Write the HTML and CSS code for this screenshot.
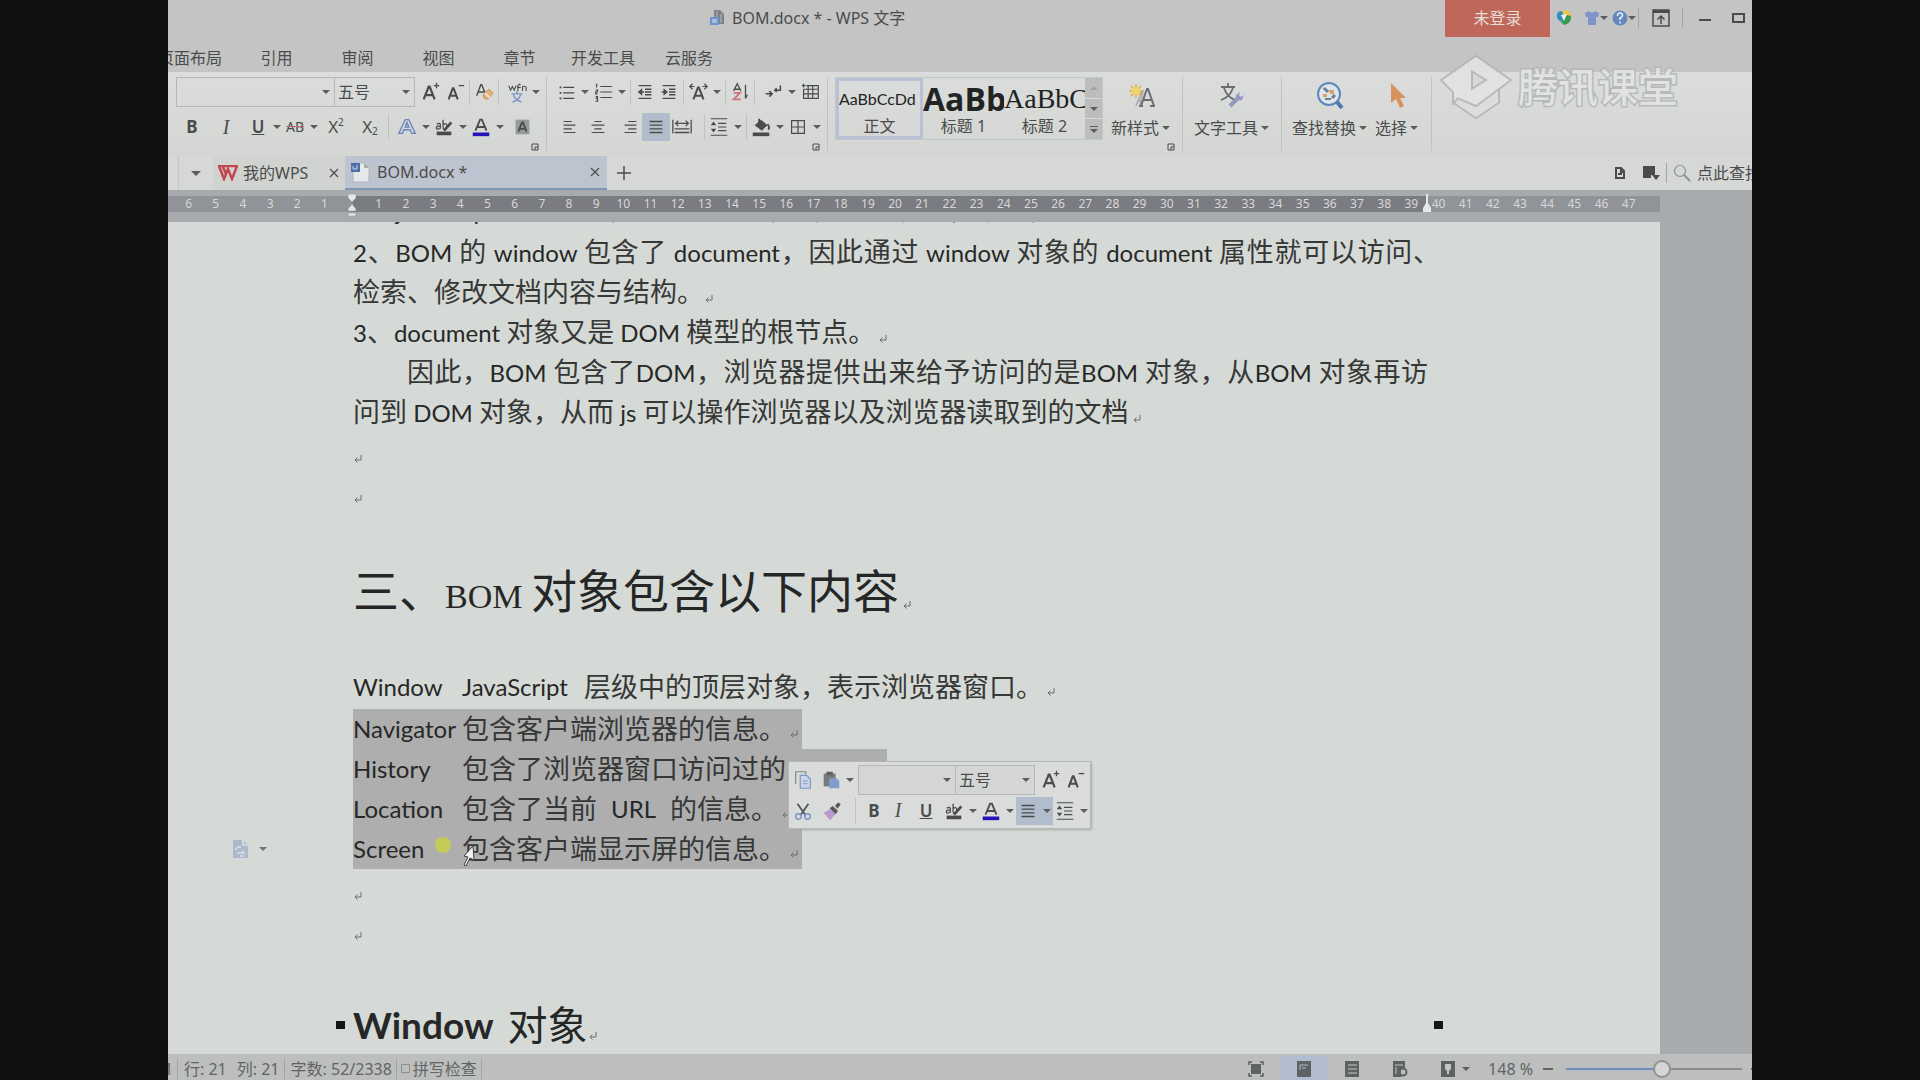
FILE: index.html
```html
<!DOCTYPE html>
<html lang="zh-CN">
<head>
<meta charset="utf-8">
<title>BOM.docx * - WPS 文字</title>
<link rel="stylesheet" href="styles.css">
</head>
<body>
<svg class="defs" aria-hidden="true">
  <symbol id="grow" viewBox="0 0 24 24"><path d="M4 20 9.500 6h1L16 20M6 15.500h8" fill="none" stroke="currentColor" stroke-width="2.400"/><path d="M18 2v6M15 5h6" stroke="currentColor" stroke-width="1.400"/></symbol>
  <symbol id="shrink" viewBox="0 0 24 24"><path d="M5 20 9.500 8h1L15 20M7 16h6" fill="none" stroke="currentColor" stroke-width="2.200"/><path d="M16 5h6" stroke="currentColor" stroke-width="1.400"/></symbol>
  <symbol id="clear" viewBox="0 0 24 24"><path d="M4 16 8.500 4h1L14 15M6 12h6" fill="none" stroke="currentColor" stroke-width="1.500"/><path d="m11 15 6-6 5 4-6 7-4-1z" fill="#e0b27c" stroke="#c88f50"/><path d="m13 13 5 5" stroke="#f2e6d4" stroke-width="2"/></symbol>
  <symbol id="pinyin" viewBox="0 0 24 24"><path d="M3 5l2 5 2-4 2 4 2-5M13 11V5q1-2 3-1M12 7h4M18 11V6q3-1 4 1v4" fill="none" stroke="currentColor" stroke-width="1.200"/><path d="M12 11v3M6 14h12M8 15q2 6 9 8M16 15q-2 6-9 8" fill="none" stroke="#7a90c8" stroke-width="1.500"/></symbol>
  <symbol id="outline" viewBox="0 0 24 24"><path d="M3 19 10 4h4l7 15h-4l-1.500-4h-7L7 19zM10 12h4l-2-5z" fill="none" stroke="#6c87c0" stroke-width="1.500"/></symbol>
  <symbol id="hilite" viewBox="0 0 24 24"><path d="M4 9q3-2 4 0v5M8 11H5q-2 1-1 3 2 1 4-1M11 4v10M11 9q4-2 4 2 0 4-4 3" fill="none" stroke="currentColor" stroke-width="1.400"/><path d="m20 7-8 9" stroke="currentColor" stroke-width="3"/><path d="M4 17h16v4H4z" fill="currentColor"/></symbol>
  <symbol id="color" viewBox="0 0 24 24"><path d="m6 16 5-12h2l5 12M8 12h8" fill="none" stroke="currentColor" stroke-width="2"/><path d="M3 18h18v4H3z" fill="#2314b4"/></symbol>
  <symbol id="shade" viewBox="0 0 24 24"><path d="M5 4h15v16H5z" fill="#979a9a"/><path d="m8 17 4-10h1l4 10M9 14h7" fill="none" stroke="#4b4d4e" stroke-width="2"/></symbol>
  <symbol id="bul" viewBox="0 0 24 24"><path d="M9 7h12M9 13h12M9 19h12" stroke="currentColor" stroke-width="1.500"/><path d="M5 6h2v2H5zM5 12h2v2H5zM5 18h2v2H5z" fill="currentColor"/></symbol>
  <symbol id="num" viewBox="0 0 24 24"><path d="M9 6h13M9 12h13M9 18h13M5 3v4M4 10h2v2H4v2h2M4 17h2v5H4M4 19h2" fill="none" stroke="currentColor" stroke-width="1.300"/></symbol>
  <symbol id="outd" viewBox="0 0 24 24"><path d="M5 5h14M12 9h7M12 12h7M12 15h7M5 19h14M6 12h5" stroke="currentColor" stroke-width="1.400"/><path d="m9 8-5 4 5 4z" fill="currentColor"/></symbol>
  <symbol id="ind" viewBox="0 0 24 24"><path d="M5 5h14M12 9h7M12 12h7M12 15h7M5 19h14M4 12h5" stroke="currentColor" stroke-width="1.400"/><path d="m6 8 5 4-5 4z" fill="currentColor"/></symbol>
  <symbol id="ascale" viewBox="0 0 24 24"><path d="m7 20 5-13h1l5 13M9 16h7" fill="none" stroke="currentColor" stroke-width="2.200"/><path d="M8 6H3M6 3 3 6l3 3M17 6h5M19 3l3 3-3 3" fill="none" stroke="currentColor" stroke-width="1.300"/></symbol>
  <symbol id="sort" viewBox="0 0 24 24"><path d="m5 11 4-8 4 8M6 9h6M18 4v15M18 19l2-4" fill="none" stroke="currentColor" stroke-width="1.400"/><path d="M5 13h7l-7 7h8" fill="none" stroke="#d4717c" stroke-width="2"/></symbol>
  <symbol id="marks" viewBox="0 0 24 24"><path d="M20 5v5h-6M16 8l-2 2 2 2M4 14h6M8 11l3 3-3 3" fill="none" stroke="currentColor" stroke-width="1.700"/></symbol>
  <symbol id="table" viewBox="0 0 24 24"><path d="M8 5h13v14H5V9M5 9h16M5 14h16M10 5v14M15 5v14M3 5h4M5 3v4" fill="none" stroke="currentColor" stroke-width="1.300"/></symbol>
  <symbol id="al" viewBox="0 0 24 24"><path d="M5 6h9M5 10h13M5 14h9M5 18h13" stroke="currentColor" stroke-width="1.300"/></symbol>
  <symbol id="ac" viewBox="0 0 24 24"><path d="M8 6h8M5 10h14M8 14h8M5 18h14" stroke="currentColor" stroke-width="1.300"/></symbol>
  <symbol id="ar" viewBox="0 0 24 24"><path d="M10 6h9M6 10h13M10 14h9M6 18h13" stroke="currentColor" stroke-width="1.300"/></symbol>
  <symbol id="aj" viewBox="0 0 24 24"><path d="M5 6h14M5 10h14M5 14h14M5 18h14" stroke="currentColor" stroke-width="1.500"/></symbol>
  <symbol id="ad" viewBox="0 0 24 24"><path d="M2 4v15M22 4v15M5 8h14M8 5 5 8l3 3M16 5l3 3-3 3M4 14h16M4 18h16" fill="none" stroke="currentColor" stroke-width="1.400"/></symbol>
  <symbol id="lsp" viewBox="0 0 24 24"><path d="M3 3h18M11 8h9M11 12h9M11 16h9M3 21h18" stroke="currentColor" stroke-width="1.300"/><path d="m3 10 3-4 3 4zM3 14l3 4 3-4z" fill="currentColor"/></symbol>
  <symbol id="fill" viewBox="0 0 24 24"><path d="m5 10 7-6 7 6-6 6z" fill="currentColor"/><path d="M19 9q3 3 1 6M10 3v5" stroke="currentColor" fill="none" stroke-width="2"/><path d="M3 18h18v4H3z" fill="currentColor"/></symbol>
  <symbol id="bord" viewBox="0 0 24 24"><path d="M5 5h14v14H5zM12 5v14M5 12h14" fill="none" stroke="currentColor" stroke-width="1.300"/></symbol>
  <symbol id="launch" viewBox="0 0 8 8"><path d="M1 1h6M1 1v6h3M7 1v3M4 4h3v3H4z" fill="none" stroke="currentColor"/></symbol>
  <symbol id="ret" viewBox="0 0 10 10"><path d="M8 1v5H2M4.500 3.500 2 6l2.500 2.500" fill="none" stroke="currentColor"/></symbol>
  <symbol id="x" viewBox="0 0 12 12"><path d="m2 2 8 8M10 2l-8 8" stroke="currentColor" stroke-width="1.200"/></symbol>
</svg>

<div class="app">
  <header class="titlebar">
    <div class="doc-title">
      <svg width="16" height="18" viewBox="0 0 16 18"><path d="M4 1h6l4 4v10H4z" fill="#7d8288"/><path d="M7 2v12M11 5v9" stroke="#b9bcbf"/><path d="M0 8h9v8H0z" fill="#6f95cf"/><path d="M2 11h5M2 13h5" stroke="#dfe6f0"/></svg>
      <span>BOM.docx * - WPS 文字</span>
    </div>
    <div class="win-tools">
      <button class="login">未登录</button>
      <button class="wt update" aria-label="更新"><svg width="16" height="18" viewBox="0 0 16 18"><path d="M1 5q1-3 5-3l2 5-2 6Q0 11 1 5" fill="#2f8fc4"/><path d="M6 2q8-2 9 5l-6 1z" fill="#e8c73c"/><path d="M15 7q1 7-7 9l-3-3 6-7z" fill="#3c9a4b"/><path d="m5 6 6-1-3 7z" fill="#eef0ee"/></svg></button>
      <button class="wt" aria-label="皮肤"><svg width="16" height="16" viewBox="0 0 16 16"><path d="M1 3 5 1q3 3 6 0l4 2-1 4h-2v8H4V7H2z" fill="#7f95c9"/></svg><i class="caret"></i></button>
      <button class="wt" aria-label="帮助"><svg width="16" height="16" viewBox="0 0 16 16"><circle cx="8" cy="8" r="7.500" fill="#6488bd"/><path d="M5.500 6q0-3 2.500-3t2.500 2.500Q10 7.500 8 8v2M8 11.500v2" fill="none" stroke="#e6eaf0" stroke-width="1.600"/></svg><i class="caret"></i></button>
      <i class="bar"></i>
      <button class="wt wide" aria-label="隐藏功能区"><svg width="18" height="18" viewBox="0 0 18 18"><path d="M1 1h16v16H1zM9 15V8M5.500 10.500 9 7l3.500 3.500" fill="none" stroke="currentColor" stroke-width="1.500"/><path d="M1 1h16v3H1z" fill="currentColor"/></svg></button>
      <i class="bar"></i>
      <button class="wt wide" aria-label="最小化"><svg width="14" height="14" viewBox="0 0 14 14"><path d="M1 9h12" stroke="currentColor" stroke-width="2"/></svg></button>
      <button class="wt wide" aria-label="最大化"><svg width="14" height="14" viewBox="0 0 14 14"><path d="M1 3h11v8H1z" fill="none" stroke="currentColor" stroke-width="2"/></svg></button>
    </div>
  </header>

  <nav class="menu">
    <a class="first" href="#">页面布局</a><a href="#">引用</a><a href="#">审阅</a><a href="#">视图</a><a href="#">章节</a><a class="long" href="#">开发工具</a><a class="long" href="#">云服务</a>
  </nav>

  <section class="ribbon">
    <div class="group font">
      <div class="row">
        <span class="combo name"><select aria-label="字体"><option></option></select><i class="caret"></i></span>
        <span class="combo size"><select aria-label="字号"><option>五号</option></select><i class="caret"></i></span>
        <button class="t m4" aria-label="增大字号"><svg><use href="#grow"/></svg></button>
        <button class="t" aria-label="减小字号"><svg><use href="#shrink"/></svg></button>
        <i class="vr"></i>
        <button class="t" aria-label="清除格式"><svg><use href="#clear"/></svg></button>
        <i class="vr"></i>
        <button class="t m4" aria-label="拼音指南"><svg><use href="#pinyin"/></svg></button><i class="dd caret"></i>
      </div>
      <div class="row second">
        <button class="t m4"><b>B</b></button>
        <button class="t m10 it">I</button>
        <button class="t m8 ul">U</button><i class="dd caret"></i>
        <button class="t st">AB</button><i class="dd caret"></i>
        <button class="t m4 sx">X<sup>2</sup></button>
        <button class="t m10 sx">X<sub>2</sub></button>
        <i class="vr m4"></i>
        <button class="t m4" aria-label="文字效果"><svg><use href="#outline"/></svg></button><i class="dd caret"></i>
        <button class="t" aria-label="突出显示"><svg><use href="#hilite"/></svg></button><i class="dd caret"></i>
        <button class="t" aria-label="字体颜色"><svg><use href="#color"/></svg></button><i class="dd caret"></i>
        <button class="t m4" aria-label="字符底纹"><svg><use href="#shade"/></svg></button>
      </div>
      <button class="launch" aria-label="字体设置"><svg><use href="#launch"/></svg></button>
    </div>

    <div class="group para">
      <div class="row">
        <button class="t" aria-label="项目符号"><svg><use href="#bul"/></svg></button><i class="dd caret"></i>
        <button class="t" aria-label="编号"><svg><use href="#num"/></svg></button><i class="dd caret"></i>
        <i class="vr"></i>
        <button class="t" aria-label="减少缩进"><svg><use href="#outd"/></svg></button>
        <button class="t" aria-label="增加缩进"><svg><use href="#ind"/></svg></button>
        <i class="vr"></i>
        <button class="t" aria-label="字符缩放"><svg><use href="#ascale"/></svg></button><i class="dd caret"></i>
        <i class="vr"></i>
        <button class="t" aria-label="排序"><svg><use href="#sort"/></svg></button>
        <i class="vr"></i>
        <button class="t m4" aria-label="段落标记"><svg><use href="#marks"/></svg></button><i class="dd caret"></i>
        <button class="t" aria-label="插入表格"><svg><use href="#table"/></svg></button>
      </div>
      <div class="row second">
        <button class="t m4" aria-label="左对齐"><svg><use href="#al"/></svg></button>
        <button class="t m4" aria-label="居中"><svg><use href="#ac"/></svg></button>
        <button class="t m8" aria-label="右对齐"><svg><use href="#ar"/></svg></button>
        <button class="t on" aria-label="两端对齐"><svg><use href="#aj"/></svg></button>
        <button class="t" aria-label="分散对齐"><svg><use href="#ad"/></svg></button>
        <i class="vr m8"></i>
        <button class="t" aria-label="行距"><svg><use href="#lsp"/></svg></button><i class="dd caret"></i>
        <i class="vr"></i>
        <button class="t" aria-label="底纹"><svg><use href="#fill"/></svg></button><i class="dd caret"></i>
        <button class="t" aria-label="边框"><svg><use href="#bord"/></svg></button><i class="dd caret"></i>
      </div>
      <button class="launch" aria-label="段落设置"><svg><use href="#launch"/></svg></button>
    </div>

    <div class="group styles">
      <div class="gallery">
        <button class="card sel"><span class="s0">AaBbCcDd</span><span>正文</span></button>
        <button class="card"><span class="s1">AaBb</span><span>标题 1</span></button>
        <button class="card"><span class="s2">AaBbC</span><span>标题 2</span></button>
        <div class="scroll"><button aria-label="向上"><i class="caret up"></i></button><button aria-label="向下"><i class="caret"></i></button><button aria-label="更多"><i class="caret more"></i></button></div>
      </div>
      <div class="new">
        <button class="big"><svg viewBox="0 0 28 28"><path d="m9 25 6-15h1l-3 15M11 20h4" fill="none" stroke="#a4a7ab" stroke-width="1.500"/><path d="m14 25 6-17h1l6 17M17 19h8M12 25h4M23 25h5" fill="none" stroke="#6b6d70" stroke-width="2"/><path d="M9 3v14M2 10h14M4 5l10 10M14 5 4 15" stroke="#dfb04a" stroke-width="1.500"/><circle cx="9" cy="10" r="4" fill="#f2d263"/></svg><span>新样式<i class="caret"></i></span></button>
        <button class="launch" aria-label="样式设置"><svg><use href="#launch"/></svg></button>
      </div>
    </div>

    <div class="group tools">
      <button class="big"><svg viewBox="0 0 28 28"><path d="M11 2v4M4 6h14M7 7q3 9 11 12M16 7q-3 9-12 12" fill="none" stroke="#6a6c6e" stroke-width="1.800"/><path d="m13 25 8-8" stroke="#9298bf" stroke-width="4"/><path d="M19 14q-1 6 6 5l2-5-3 2-2-2 1-3z" fill="#9298bf"/></svg><span>文字工具<i class="caret"></i></span></button>
    </div>
    <div class="group find">
      <button class="big"><svg viewBox="0 0 28 28"><circle cx="13" cy="13" r="11" fill="#dfe4e8" stroke="#5d87ba" stroke-width="2"/><path d="m21 21 5 6" stroke="#4c78b0" stroke-width="4"/><path d="m8 7 4 4M16 17l3-3" stroke="#6a7f9b" stroke-width="3"/><path d="M13 9h5v4h-4zM7 13h4v3H7z" fill="#d6a26a"/><path d="M9 18h6" stroke="#6a7f9b" stroke-width="2"/></svg><span>查找替换<i class="caret"></i></span></button>
      <button class="big"><svg viewBox="0 0 28 28"><path d="M8 2v20l5-4 4 9 4-2-4-8h6z" fill="#d5935b"/></svg><span>选择<i class="caret"></i></span></button>
    </div>
  </section>

  <section class="tabs">
    <button class="tabmenu" aria-label="标签列表"><i class="caret large"></i></button>
    <div class="tab home"><svg width="22" height="16" viewBox="0 0 22 16"><path d="M1 1h20M2 1l5 13 4-10 4 10 5-13M6 2l3 7" fill="none" stroke="#c4474f" stroke-width="2.500"/></svg><a href="#">我的WPS</a><button aria-label="关闭"><svg width="12" height="12"><use href="#x"/></svg></button></div>
    <div class="tab doc"><svg width="20" height="22" viewBox="0 0 20 22"><path d="M3 2h11l5 5v14H3z" fill="#e6e9ec" stroke="#b0b4ba"/><path d="M14 2v5h5" fill="#b0a9a4"/><path d="M1 2h9v9H1z" fill="#4d6ea8"/><path d="M3 5v3h4V4" fill="none" stroke="#cfd8e6"/></svg><a href="#">BOM.docx *</a><button aria-label="关闭"><svg width="12" height="12"><use href="#x"/></svg></button></div>
    <button class="plus" aria-label="新建"><svg width="16" height="16" viewBox="0 0 16 16"><path d="M8 1v14M1 8h14" stroke="currentColor" stroke-width="1.500"/></svg></button>
    <div class="tabright">
      <button aria-label="文档"><svg width="12" height="14" viewBox="0 0 12 14"><path d="M2 2h5l3 3v7H2zM7 2v4h3M4 8h4" fill="none" stroke="currentColor" stroke-width="2"/></svg></button>
      <button class="m10" aria-label="任务窗格"><svg width="18" height="16" viewBox="0 0 18 16"><path d="M1 1h12v9H9v3H1zM10 10h8l-4 5z" fill="currentColor"/></svg></button>
      <i class="bar"></i>
      <svg width="18" height="18" viewBox="0 0 18 18"><circle cx="7" cy="7" r="5.500" fill="none" stroke="#8c9090" stroke-width="1.200"/><path d="m11 11 6 6" stroke="#8c9090" stroke-width="2"/></svg>
      <span>点此查找</span>
    </div>
  </section>

  <main class="canvas">
    <div class="ruler" aria-hidden="true">
      <div class="ticks"><span>6</span><span>5</span><span>4</span><span>3</span><span>2</span><span>1</span><span></span><span>1</span><span>2</span><span>3</span><span>4</span><span>5</span><span>6</span><span>7</span><span>8</span><span>9</span><span>10</span><span>11</span><span>12</span><span>13</span><span>14</span><span>15</span><span>16</span><span>17</span><span>18</span><span>19</span><span>20</span><span>21</span><span>22</span><span>23</span><span>24</span><span>25</span><span>26</span><span>27</span><span>28</span><span>29</span><span>30</span><span>31</span><span>32</span><span>33</span><span>34</span><span>35</span><span>36</span><span>37</span><span>38</span><span>39</span><span>40</span><span>41</span><span>42</span><span>43</span><span>44</span><span>45</span><span>46</span><span>47</span></div>
      <svg class="indent left" width="10" height="24" viewBox="0 0 10 24"><path d="M1 1h8v4L5 9 1 5zM5 11l4 5v2H1v-2zM1 20h8v3H1z" fill="#e6e8e8" stroke="#8a8d90" stroke-width=".6"/></svg>
      <svg class="indent right" width="10" height="20" viewBox="0 0 10 20"><path d="M4 1h2v9l3 5v4H1v-4l3-5z" fill="#e6e8e8"/></svg>
    </div>
    <article class="page">
      <p class="line">1、<span class="en">javascript </span>是通过访问<span class="en"> BOM </span>对象来访问、控制、修改浏览</p>
      <p class="line full hang"><span class="en">2</span>、<span class="en">BOM </span>的<span class="en"> window </span>包含了<span class="en"> document</span>，因此通过<span class="en"> window </span>对象的<span class="en"> document </span>属性就可以访问、</p>
      <p class="line">检索、修改文档内容与结构。<svg class="ret"><use href="#ret"/></svg></p>
      <p class="line"><span class="en">3</span>、<span class="en">document </span>对象又是<span class="en"> DOM </span>模型的根节点。<svg class="ret"><use href="#ret"/></svg></p>
      <p class="line full first-indent">因此，<span class="en">BOM </span>包含了<span class="en">DOM</span>，浏览器提供出来给予访问的是<span class="en">BOM </span>对象，从<span class="en">BOM </span>对象再访</p>
      <p class="line">问到<span class="en"> DOM </span>对象，从而<span class="en"> js </span>可以操作浏览器以及浏览器读取到的文档<svg class="ret"><use href="#ret"/></svg></p>
      <p class="line"><svg class="ret"><use href="#ret"/></svg></p>
      <p class="line"><svg class="ret"><use href="#ret"/></svg></p>
      <h1>三、<span class="serif">BOM </span>对象包含以下内容<svg class="ret"><use href="#ret"/></svg></h1>
      <p class="line def"><span class="en key">Window</span><span class="en js">JavaScript</span>层级中的顶层对象，表示浏览器窗口。<svg class="ret"><use href="#ret"/></svg></p>
      <div class="selection">
        <p class="line def"><span class="en key">Navigator</span>包含客户端浏览器的信息。<svg class="ret"><use href="#ret"/></svg></p>
        <p class="line def longer"><span class="en key">History</span>包含了浏览器窗口访问过的</p>
        <p class="line def"><span class="en key">Location</span>包含了当前<span class="en url">URL</span>的信息。<svg class="ret"><use href="#ret"/></svg></p>
        <p class="line def"><span class="en key">Screen</span>包含客户端显示屏的信息。<svg class="ret"><use href="#ret"/></svg></p>

        <div class="mini">
          <div class="row">
            <button class="t" aria-label="复制"><svg viewBox="0 0 24 24"><path d="M4 16V3h11v3" fill="none" stroke="#7f8688" stroke-width="1.300"/><path d="M9 7h7l4 4v10H9z" fill="#c9d5e6" stroke="#7a97c4" stroke-width="1.300"/><path d="M12 13h5M12 16h5" stroke="#7a97c4"/></svg></button>
            <button class="t m4" aria-label="粘贴"><svg viewBox="0 0 24 24"><path d="M4 5h13v14H4z" fill="#77797b"/><path d="M7 3h7v4H7z" fill="#5e6062"/><path d="M10 10h8l3 3v8H10z" fill="#7f9bd0"/></svg></button><i class="dd caret"></i>
            <span class="combo mini-name"><select aria-label="字体"><option></option></select><i class="caret"></i></span>
            <span class="combo mini-size"><select aria-label="字号"><option>五号</option></select><i class="caret"></i></span>
            <button class="t m4" aria-label="增大字号"><svg><use href="#grow"/></svg></button>
            <button class="t" aria-label="减小字号"><svg><use href="#shrink"/></svg></button>
          </div>
          <div class="row">
            <button class="t" aria-label="剪切"><svg viewBox="0 0 24 24"><path d="m6 4 9 13M18 4 9 17" stroke="#55575a" stroke-width="2"/><circle cx="7" cy="18" r="3" fill="none" stroke="#7a97c4" stroke-width="1.500"/><circle cx="17" cy="18" r="3" fill="none" stroke="#7a97c4" stroke-width="1.500"/></svg></button>
            <button class="t m4" aria-label="格式刷"><svg viewBox="0 0 24 24"><path d="m4 14 7-4 6 5-6 7z" fill="#b79ad0"/><path d="m11 9 3-2 5 5-2 3zM17 6l3-3 2 2-3 4z" fill="#55575a" stroke="#55575a"/></svg></button>
            <i class="vr m10"></i>
            <button class="t m4"><b>B</b></button>
            <button class="t it">I</button>
            <button class="t m4 ul">U</button>
            <button class="t m4" aria-label="突出显示"><svg><use href="#hilite"/></svg></button><i class="dd caret"></i>
            <button class="t" aria-label="字体颜色"><svg><use href="#color"/></svg></button><i class="dd caret"></i>
            <span class="onbox"><button class="t" aria-label="对齐"><svg><use href="#aj"/></svg></button><i class="dd caret"></i></span>
            <button class="t" aria-label="行距"><svg><use href="#lsp"/></svg></button><i class="dd caret"></i>
          </div>
        </div>
        <i class="halo"></i>
        <svg class="pointer" width="14" height="22" viewBox="0 0 14 22"><path d="m11 1-9 10 4 1-4 8 2 1 4-8 4 2z" fill="#f0f1f0" stroke="#3d3f3e"/></svg>
        <button class="smart" aria-label="粘贴选项"><svg width="18" height="20" viewBox="0 0 18 20"><path d="M1 1h10l5 5v13H1z" fill="#a5b0cc"/><path d="M11 1v5h5M3 11l3-3h3M5 14h7l-2-2M8 17h4" fill="none" stroke="#dde1e8" stroke-width="1.500"/></svg><i class="caret"></i></button>
      </div>
      <p class="line"><svg class="ret"><use href="#ret"/></svg></p>
      <p class="line"><svg class="ret"><use href="#ret"/></svg></p>
      <h2><i class="sq"></i><span class="en">Window</span>对象<svg class="ret"><use href="#ret"/></svg><i class="sq end"></i></h2>
    </article>
  </main>

  <footer class="status">
    <span class="cell pg">1</span>
    <span class="cell"><span>行: 21</span><span>列: 21</span></span>
    <span class="cell">字数: 52/2338</span>
    <label class="cell spell"><input type="checkbox">拼写检查</label>
    <div class="views">
      <button aria-label="全屏"><svg width="16" height="16" viewBox="0 0 16 16"><path d="M3 3h10v10H3z" fill="currentColor"/><path d="M1 4V1h3M12 1h3v3M15 12v3h-3M4 15H1v-3" fill="none" stroke="currentColor" stroke-width="1.500"/></svg></button>
      <button class="on" aria-label="页面视图"><svg width="16" height="16" viewBox="0 0 16 16"><path d="M1 0h14v16H1z" fill="currentColor"/><path d="M4 9V4h8M6 7h4" fill="none" stroke="#b4bfce"/></svg></button>
      <button aria-label="大纲视图"><svg width="16" height="16" viewBox="0 0 16 16"><path d="M1 0h14v16H1z" fill="currentColor"/><path d="M4 4h9M4 8h9M4 12h9" stroke="#c4c6c5"/></svg></button>
      <button aria-label="Web版式"><svg width="16" height="16" viewBox="0 0 16 16"><path d="M1 0h12v7H9v9H1z" fill="currentColor"/><path d="M3 4h8M4 6v7" stroke="#c4c6c5"/><circle cx="11" cy="11" r="3.500" fill="none" stroke="currentColor" stroke-width="2"/></svg></button>
      <button aria-label="护眼模式"><svg width="16" height="16" viewBox="0 0 16 16"><path d="M1 0h14v16H1z" fill="currentColor"/><path d="M5 3h6v5l-2 2v3H7v-3L5 8z" fill="#c4c6c5"/></svg></button>
    </div>
    <i class="caret"></i>
    <output>148 %</output>
    <button class="zoom" aria-label="缩小"><svg width="12" height="12" viewBox="0 0 12 12"><path d="M1 6h10" stroke="currentColor" stroke-width="2"/></svg></button>
    <input class="slider" type="range" min="0" max="100" value="55" aria-label="显示比例">
    <button class="zoom" aria-label="放大"><svg width="12" height="12" viewBox="0 0 12 12"><path d="M1 6h10M6 1v10" stroke="currentColor" stroke-width="2"/></svg></button>
  </footer>

  <div class="brand">
    <svg width="74" height="66" viewBox="0 0 74 76" preserveAspectRatio="none"><path d="M14 36v20l23 18 23-18V36" fill="#dcdfdd" stroke="#b4b6b6" stroke-width="2"/><path d="M37 2 72 30 37 60l-18-9-5 6V44L2 30z" fill="#e1e4e2" stroke="#b4b6b6" stroke-width="2"/><path d="m33 20 14 10-14 10z" fill="#d6d9d7" stroke="#b4b6b6" stroke-width="2"/></svg>
    <span>腾讯课堂</span>
  </div>
</div>
</body>
</html>
```
FILE: styles.css
```css
* { box-sizing: border-box; }

body {
  margin: 0;
  padding: 0 168px;
  background: #101010;
  color: #4a4c4c;
  font: 16px/20px "Noto Sans", "Noto Sans CJK SC", sans-serif;
}

button, select, input { font: inherit; color: inherit; }
button { display: inline-flex; align-items: center; justify-content: center; padding: 0; border: 0; background: none; }
a { color: inherit; text-decoration: none; }
p, h1, h2 { margin: 0; font-weight: 400; }
i { font-style: normal; }
.defs { display: none; }

.app {
  position: relative;
  display: flex;
  flex-direction: column;
  height: 100vh;
  overflow: hidden;
  background: #c4c4c4;
}

.caret::before {
  content: "";
  display: block;
  border: 4px solid transparent;
  border-top-color: #5b5d5d;
  border-bottom: 0;
}
.caret.large::before { border-width: 5px 5px 0; }
.caret.up::before { border: 4px solid transparent; border-bottom-color: #a2a4a4; border-top: 0; }
.caret.more { padding-top: 2px; border-top: 1px solid #5b5d5d; }
.bar { width: 1px; height: 20px; background: #a3a5a5; }

/* title bar */
.titlebar { display: flex; justify-content: space-between; height: 38px; flex: none; padding-left: 542px; }
.doc-title { display: flex; align-items: center; gap: 6px; height: 36px; white-space: nowrap; }
.win-tools { display: flex; align-items: center; height: 36px; }
.login { width: 105px; height: 37px; background: #bf6859; color: #e8dcd8; }
.wt { width: 28px; height: 30px; }
.wt.update { margin-right: 4px; }
.wt.wide { width: 43px; }
.wt.wide:last-child { width: 26px; }

.menu { display: flex; height: 34px; flex: none; line-height: 40px; text-align: center; white-space: nowrap; }
.menu a { width: 81px; }
.menu .first { width: 92px; margin-left: -24px; }
.menu .long { width: 86px; }

/* ribbon */
.ribbon { display: flex; height: 84px; flex: none; padding-left: 8px; background: linear-gradient(#dadddb, #d4d6d3); }
.group { position: relative; padding: 5px 8px 0 0; }
.group::after { content: ""; position: absolute; right: 0; top: 5px; bottom: 5px; width: 1px; background: #bfc2c1; }
.row { display: flex; align-items: center; height: 30px; }
.row.second { height: 28px; margin-top: 6px; }
.font { width: 371px; }
.para { width: 281px; padding-left: 7px; }
.styles { display: flex; width: 355px; padding-left: 7px; }
.tools { display: flex; justify-content: center; width: 99px; padding-left: 6px; }
.find { display: flex; gap: 8px; width: 150px; padding-left: 10px; }

.t { flex: none; width: 24px; height: 28px; font-size: 17px; }
.t svg { width: 22px; height: 22px; }
.t.on, .onbox { background: #b1bccd; }
.t.on { width: 28px; }
.it { font: italic 20px "Liberation Serif", serif; }
.ul { font-weight: 600; text-decoration: underline; }
.st { font-size: 14px; text-decoration: line-through #b86a72; }
.sx sup, .sx sub { font-size: 10px; line-height: 10px; vertical-align: baseline; }
.sx sup { padding-bottom: 10px; }
.sx sub { padding-top: 8px; }
.dd { flex: none; display: flex; justify-content: center; width: 13px; }
.m4 { margin-left: 4px; }
.m8 { margin-left: 8px; }
.m10 { margin-left: 10px; }
.vr { flex: none; width: 5px; height: 26px; padding: 0 2px; background: #bfc2c1 content-box; }
.launch { position: absolute; right: 8px; bottom: 5px; width: 8px; height: 8px; }
.launch svg { width: 8px; height: 8px; }

.combo { position: relative; flex: none; height: 30px; border: 1px solid #b5b8b7; }
.combo + .combo { border-left: 0; }
.combo select { width: 100%; height: 100%; padding: 0 3px; border: 0; background: none; appearance: none; }
.combo .caret { position: absolute; right: 4px; top: 12px; }
.name { width: 159px; }
.size { width: 80px; }

.gallery { display: flex; width: 268px; height: 63px; border: 1px solid #c3c6ca; }
.card { flex: 1; flex-direction: column; justify-content: flex-end; min-width: 0; padding-bottom: 3px; overflow: hidden; white-space: nowrap; }
.card.sel { border: 3px solid #b9c1d4; padding-bottom: 0; }
.card span { display: block; width: 100%; overflow: hidden; }
.card .s0, .card .s1, .card .s2 { height: 34px; color: #222423; line-height: 34px; text-align: left; }
.card .s0 { font-size: 16px; font-family: Lato, sans-serif; }
.card .s1 { font: bold 32px/34px "Open Sans", sans-serif; }
.card .s2 { font: 28px/34px "Liberation Serif", serif; }
.scroll { display: flex; flex-direction: column; gap: 1px; width: 17px; }
.scroll button { flex: 1; background: #bcbebd; }

.big { flex-direction: column; justify-content: flex-start; gap: 9px; height: 72px; padding-top: 4px; white-space: nowrap; }
.big svg { width: 28px; height: 28px; }
.big span { display: flex; align-items: center; gap: 3px; }
.new { padding-left: 8px; }

/* document tabs */
.tabs { display: flex; height: 34px; flex: none; padding-left: 10px; background: #d5d8d5; white-space: nowrap; }
.tabmenu { width: 35px; border-left: 1px solid #c3c6c5; }
.tab { display: flex; align-items: center; gap: 4px; padding: 0 4px; }
.tab button { width: 14px; height: 20px; margin-left: auto; }
.tab.home { width: 132px; background: #d0d3d0; }
.tab.doc { width: 262px; gap: 7px; padding: 0 5px; background: #bec3d0; border-bottom: 2px solid #7f95b6; }
.plus { width: 34px; }
.tabright { display: flex; align-items: center; flex: none; gap: 6px; width: 138px; margin-left: auto; overflow: hidden; }
.tabright > * { flex: none; }

/* canvas */
.canvas { flex: 1; min-height: 0; overflow: hidden; background: #a8abae; }
.ruler {
  position: relative;
  height: 16px;
  margin: 6px 92px 10px 0;
  background: linear-gradient(90deg, #909397 185px, #7b7b82 185px, #7b7b82 calc(100% - 232px), #909397 calc(100% - 232px));
}
.ticks { display: flex; padding: 0 18px 0 7px; color: #d6d8da; font-size: 12px; line-height: 15px; text-align: center; }
.ticks span { flex: 1 1 0; width: 0; }
.indent { position: absolute; top: -3px; }
.indent.left { left: 179px; }
.indent.right { right: 228px; }

.page {
  height: calc(100% - 32px);
  margin-right: 92px;
  padding: 0 232px 0 185px;
  overflow: hidden;
  background: #d6dad6;
  color: #363837;
  font: 300 27px/40px Lato, "Noto Sans CJK SC", sans-serif;
}
.line { height: 40px; white-space: nowrap; }
.page > .line:first-child { margin: -32px 0 2px; }
.line.full { text-align: justify; text-align-last: justify; }
.line.hang { margin-right: -12px; }
.first-indent { padding-left: 54px; }
.en { color: #262827; font-size: 24px; font-weight: 400; }
.ret { width: 10px; height: 10px; margin-left: 3px; vertical-align: -2px; color: #6b6e6c; }
.line > .ret:first-child { margin-left: 0; }

h1 { height: 56px; margin: 51px 0 48px; color: #252726; font-size: 46px; line-height: 56px; white-space: nowrap; }
.serif { font: 34px "Liberation Serif", serif; }
.def { display: flex; align-items: center; }
.def .ret { margin-top: 10px; margin-left: 3px; }
.key { flex: none; width: 109px; }
.js { width: 122px; }
.url { padding: 0 14px; }

.selection { position: relative; margin-top: 2px; }
.selection .line { width: 449px; background: #aeaeae; }
.selection .longer { width: 534px; }

.mini {
  position: absolute;
  left: 435px;
  top: 52px;
  width: 303px;
  padding: 2px;
  border: 1px solid #b6b9b8;
  background: #d9dcda;
  box-shadow: 1px 1px 2px #a9acab;
  color: #4a4c4c;
  font: 16px/20px "Noto Sans", "Noto Sans CJK SC", sans-serif;
}
.mini .row { height: 31px; }
.mini .combo { background: #d3d6d4; }
.mini-name { width: 98px; margin-left: 2px; }
.mini-size { width: 79px; }
.onbox { display: flex; align-items: center; }
.halo { position: absolute; left: 82px; top: 128px; width: 16px; height: 16px; border-radius: 50%; background: #c5cc55; }
.pointer { position: absolute; left: 109px; top: 136px; }
.smart { position: absolute; left: -121px; top: 130px; gap: 9px; opacity: .8; }

h2 { display: flex; align-items: center; height: 56px; margin: 48px -15px 0 -17px; color: #252726; font-size: 40px; line-height: 56px; }
h2 .en { margin: 0 14px 0 8px; font-size: 37px; font-weight: 700; }
h2 .ret { margin-top: 22px; margin-left: 0; }
.sq { width: 9px; height: 8px; background: #151716; }
.sq.end { margin-left: auto; }

/* status bar */
.status { display: flex; align-items: center; height: 26px; flex: none; padding-top: 3px; background: #bdbfbe; color: #626464; white-space: nowrap; overflow: hidden; }
.cell { display: flex; gap: 10px; padding: 0 4px 0 6px; border-right: 1px solid #a2a4a4; }
.cell.pg { width: 10px; padding: 0; text-indent: -4px; }
.spell { align-items: center; gap: 3px; padding-left: 4px; }
.spell input { width: 9px; height: 9px; margin: 0; border: 1px solid #8e9090; appearance: none; }
.views { display: flex; margin-left: auto; }
.views button { width: 48px; height: 26px; color: #5f6262; }
.views .on { background: #b1bdcf; }
.status > .caret { margin-left: -10px; }
.status output { margin: 0 9px 0 18px; }
.zoom { flex: none; width: 12px; height: 20px; }
.slider {
  flex: none;
  width: 176px;
  height: 20px;
  margin: 0 8px 0 12px;
  background: linear-gradient(90deg, #6d8cc0 55%, #8a8c8c 55%) center / 100% 2px no-repeat;
  appearance: none;
}
.slider::-webkit-slider-thumb { width: 18px; height: 18px; border: 2px solid #8f9291; border-radius: 50%; background: #d3d6d5; appearance: none; }
.status .zoom:last-child { margin-right: -10px; }

/* watermark */
.brand { position: absolute; right: 74px; top: 54px; display: flex; align-items: center; gap: 5px; opacity: .9; }
.brand span {
  color: #e1e4e2;
  font-size: 40px;
  font-weight: 500;
  line-height: 48px;
  -webkit-text-stroke: 3px #b4b6b6;
  paint-order: stroke fill;
}
```
